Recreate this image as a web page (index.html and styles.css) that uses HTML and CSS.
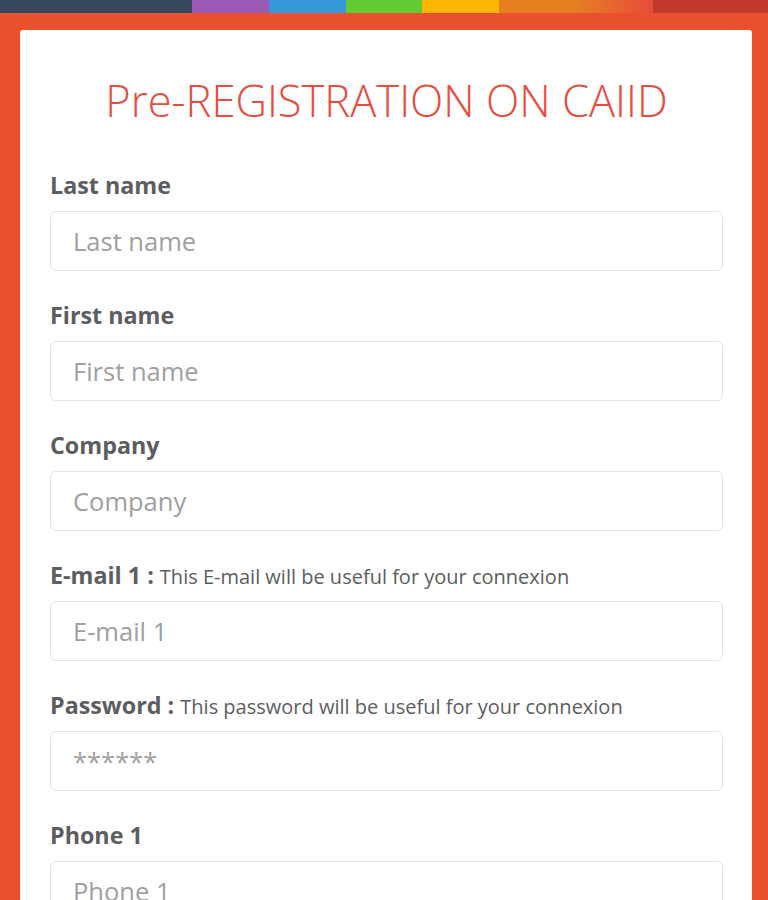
FILE: index.html
```html
<!DOCTYPE html>
<html lang="en">
<head>
<meta charset="utf-8">
<title>Pre-REGISTRATION ON CAIID</title>
<link rel="stylesheet" href="styles.css">
</head>
<body>
<div class="color-line"></div>
<main class="page">
  <section class="card">
    <h1 class="title">Pre-REGISTRATION ON CAIID</h1>
    <form class="form">
      <div class="group">
        <label class="label" for="lastname">Last name</label>
        <input class="input" id="lastname" type="text" placeholder="Last name">
      </div>
      <div class="group">
        <label class="label" for="firstname">First name</label>
        <input class="input" id="firstname" type="text" placeholder="First name">
      </div>
      <div class="group">
        <label class="label" for="company">Company</label>
        <input class="input" id="company" type="text" placeholder="Company">
      </div>
      <div class="group">
        <label class="label" for="email1">E-mail 1 : <span class="hint">This E-mail will be useful for your connexion</span></label>
        <input class="input" id="email1" type="text" placeholder="E-mail 1">
      </div>
      <div class="group">
        <label class="label" for="password">Password : <span class="hint">This password will be useful for your connexion</span></label>
        <input class="input" id="password" type="text" placeholder="******">
      </div>
      <div class="group">
        <label class="label" for="phone1">Phone 1</label>
        <input class="input" id="phone1" type="text" placeholder="Phone 1">
      </div>
    </form>
  </section>
</main>
</body>
</html>
```
FILE: styles.css
```css
* { box-sizing: border-box; }
html, body { margin: 0; padding: 0; }
body {
  background: #e8502e;
  font-family: "Open Sans", "Liberation Sans", sans-serif;
  color: #5d5f62;
  height: 900px;
  overflow: hidden;
}
.color-line {
  height: 13px;
  background-image: linear-gradient(to right, #34495e, #34495e 25%, #9b59b6 25%, #9b59b6 35%, #3498db 35%, #3498db 45%, #62cb31 45%, #62cb31 55%, #ffb606 55%, #ffb606 65%, #e67e22 65%, #e67e22 75%, #e74c3c 85%, #e74c3c 85%, #c0392b 85%, #c0392b 100%);
}
.page {
  padding: 17px 16px 0 20px;
}
.card {
  background: #fff;
  border-radius: 3px;
  padding: 41px 29px 60px 30px;
}
.title {
  margin: 0 0 40px;
  font-weight: 300;
  font-size: 43.5px;
  line-height: 60px;
  color: #e74c3c;
  text-align: center;
}
.form {
  display: flex;
  flex-direction: column;
  gap: 30px;
}
.group {
  display: flex;
  flex-direction: column;
  gap: 12px;
}
.label {
  display: block;
  height: 28px;
  font-weight: 700;
  font-size: 23.3px;
  line-height: 28px;
  color: #5b5d60;
  white-space: nowrap;
}
.hint {
  font-weight: 400;
  font-size: 20px;
  line-height: 20px;
  color: #5b5d60;
}
.input {
  height: 60px;
  width: 100%;
  border: 1px solid #e2e3e5;
  border-radius: 6px;
  padding: 0 22px;
  font-family: "Open Sans", "Liberation Sans", sans-serif;
  font-size: 25.5px;
  color: #555;
  background: #fff;
  outline: none;
}
.input::placeholder {
  color: #a0a0a0;
  opacity: 1;
}
```
